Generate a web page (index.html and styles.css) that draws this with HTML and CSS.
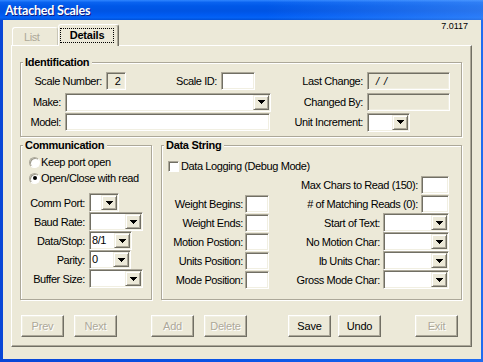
FILE: index.html
```html
<!DOCTYPE html>
<html lang="en">
<head>
<meta charset="utf-8">
<title>Attached Scales</title>
<link rel="stylesheet" href="styles.css">
</head>
<body>
<div class="window">
  <div class="titlebar"><span class="title">Attached Scales</span></div>
  <div class="client">
    <div class="header">
      <div class="tabs">
        <div class="tab tab-off">List</div>
        <div class="tab tab-on"><span class="focus">Details</span></div>
      </div>
      <div class="version">7.0117</div>
    </div>

    <div class="panel">
      <div class="group g-ident">
        <span class="legend">Identification</span>
        <div class="id-row">
          <span class="lbl w85">Scale Number:</span>
          <div class="box disabled w20 num">2</div>
          <span class="lbl w95">Scale ID:</span>
          <div class="box w34"></div>
          <span class="lbl w112">Last Change:</span>
          <div class="box disabled w83 date">/ /</div>
        </div>
        <div class="id-row r2">
          <span class="lbl w44">Make:</span>
          <div class="combo w206"><span class="val"></span><span class="drop"><svg width="7" height="4" viewBox="0 0 7 4"><path d="M0 0h7v1H0zM1 1h5v1H1zM2 2h3v1H2zM3 3h1v1H3z"/></svg></span></div>
          <span class="lbl w96">Changed By:</span>
          <div class="box disabled w83"></div>
        </div>
        <div class="id-row r3">
          <span class="lbl w44">Model:</span>
          <div class="box w205"></div>
          <span class="lbl w97">Unit Increment:</span>
          <div class="combo w43"><span class="val"></span><span class="drop"><svg width="7" height="4" viewBox="0 0 7 4"><path d="M0 0h7v1H0zM1 1h5v1H1zM2 2h3v1H2zM3 3h1v1H3z"/></svg></span></div>
        </div>
      </div>

      <div class="mid">
        <div class="group g-comm">
          <span class="legend">Communication</span>
          <div class="opt first"><span class="radio"></span><span>Keep port open</span></div>
          <div class="opt"><span class="radio on"></span><span>Open/Close with read</span></div>
          <div class="comm-rows">
            <div class="c-row">
              <span class="lbl w68">Comm Port:</span>
              <div class="combo w30"><span class="val"></span><span class="drop"><svg width="7" height="4" viewBox="0 0 7 4"><path d="M0 0h7v1H0zM1 1h5v1H1zM2 2h3v1H2zM3 3h1v1H3z"/></svg></span></div>
            </div>
            <div class="c-row">
              <span class="lbl w68">Baud Rate:</span>
              <div class="combo w54"><span class="val"></span><span class="drop"><svg width="7" height="4" viewBox="0 0 7 4"><path d="M0 0h7v1H0zM1 1h5v1H1zM2 2h3v1H2zM3 3h1v1H3z"/></svg></span></div>
            </div>
            <div class="c-row">
              <span class="lbl w68">Data/Stop:</span>
              <div class="combo w43"><span class="val">8/1</span><span class="drop"><svg width="7" height="4" viewBox="0 0 7 4"><path d="M0 0h7v1H0zM1 1h5v1H1zM2 2h3v1H2zM3 3h1v1H3z"/></svg></span></div>
            </div>
            <div class="c-row">
              <span class="lbl w68">Parity:</span>
              <div class="combo w42"><span class="val">0</span><span class="drop"><svg width="7" height="4" viewBox="0 0 7 4"><path d="M0 0h7v1H0zM1 1h5v1H1zM2 2h3v1H2zM3 3h1v1H3z"/></svg></span></div>
            </div>
            <div class="c-row">
              <span class="lbl w68">Buffer Size:</span>
              <div class="combo w54"><span class="val"></span><span class="drop"><svg width="7" height="4" viewBox="0 0 7 4"><path d="M0 0h7v1H0zM1 1h5v1H1zM2 2h3v1H2zM3 3h1v1H3z"/></svg></span></div>
            </div>
          </div>
        </div>

        <div class="group g-data">
          <span class="legend">Data String</span>
          <div class="chk-row"><span class="check"></span><span>Data Logging (Debug Mode)</span></div>
          <div class="data-cols">
            <div class="d-left">
              <div class="d-row"></div>
              <div class="d-row"><span class="lbl w83 p2">Weight Begins:</span><div class="box w24"></div></div>
              <div class="d-row"><span class="lbl w83 p2">Weight Ends:</span><div class="box w24"></div></div>
              <div class="d-row"><span class="lbl w83 p2">Motion Postion:</span><div class="box w24"></div></div>
              <div class="d-row"><span class="lbl w83 p2">Units Position:</span><div class="box w24"></div></div>
              <div class="d-row"><span class="lbl w83 p2">Mode Position:</span><div class="box w24"></div></div>
            </div>
            <div class="d-right">
              <div class="d-row end"><span class="lbl p3">Max Chars to Read (150):</span><div class="box w28"></div></div>
              <div class="d-row end"><span class="lbl p3"># of Matching Reads (0):</span><div class="box w28"></div></div>
              <div class="d-row end"><span class="lbl p3">Start of Text:</span><div class="combo w66"><span class="val"></span><span class="drop"><svg width="7" height="4" viewBox="0 0 7 4"><path d="M0 0h7v1H0zM1 1h5v1H1zM2 2h3v1H2zM3 3h1v1H3z"/></svg></span></div></div>
              <div class="d-row end"><span class="lbl p3">No Motion Char:</span><div class="combo w66"><span class="val"></span><span class="drop"><svg width="7" height="4" viewBox="0 0 7 4"><path d="M0 0h7v1H0zM1 1h5v1H1zM2 2h3v1H2zM3 3h1v1H3z"/></svg></span></div></div>
              <div class="d-row end"><span class="lbl p3">lb Units Char:</span><div class="combo w66"><span class="val"></span><span class="drop"><svg width="7" height="4" viewBox="0 0 7 4"><path d="M0 0h7v1H0zM1 1h5v1H1zM2 2h3v1H2zM3 3h1v1H3z"/></svg></span></div></div>
              <div class="d-row end"><span class="lbl p3">Gross Mode Char:</span><div class="combo w66"><span class="val"></span><span class="drop"><svg width="7" height="4" viewBox="0 0 7 4"><path d="M0 0h7v1H0zM1 1h5v1H1zM2 2h3v1H2zM3 3h1v1H3z"/></svg></span></div></div>
            </div>
          </div>
        </div>
      </div>

      <div class="buttons">
        <div class="btn off">Prev</div>
        <div class="btn off b-next">Next</div>
        <div class="btn off b-add">Add</div>
        <div class="btn off b-del">Delete</div>
        <div class="btn b-save">Save</div>
        <div class="btn b-undo">Undo</div>
        <div class="btn off b-exit">Exit</div>
      </div>
    </div>
  </div>
</div>
</body>
</html>
```

FILE: styles.css
```css
* { box-sizing: border-box; }
html, body { margin: 0; padding: 0; }
body {
  width: 483px;
  height: 362px;
  overflow: hidden;
  font-family: "Liberation Sans", Arial, sans-serif;
  font-size: 11px;
  letter-spacing: -0.4px;
  color: #000;
  background: #0a4fe0;
}

.window {
  width: 483px;
  height: 362px;
  display: flex;
  flex-direction: column;
  background: linear-gradient(to right, #0846d6, #0a55e6 50%, #1f6cf0);
}

.titlebar {
  flex: none;
  height: 20px;
  display: flex;
  align-items: center;
  padding-left: 5px;
  background:
    linear-gradient(to right, rgba(255,255,255,0) 55%, rgba(120,180,255,0.35) 100%),
    linear-gradient(to bottom, #2f86ff 0%, #0a63f0 12%, #0058e8 30%, #0054e3 55%, #005bf2 75%, #0462f5 88%, #0050d8 100%);
}
.title {
  color: #fff;
  font-family: Lato, "Liberation Sans", sans-serif;
  font-weight: bold;
  font-size: 12.5px;
  letter-spacing: -0.2px;
  text-shadow: 1px 1px 0 #0a1883;
}

.client {
  flex: 1;
  margin: 0 2px 3px 3px;
  background: #ece9d8;
  display: flex;
  flex-direction: column;
}

/* header: tabs + version */
.header {
  display: flex;
  justify-content: space-between;
  align-items: flex-start;
  height: 25px;
  position: relative;
  z-index: 1;
}
.tabs {
  display: flex;
  align-items: flex-end;
  height: 26px;
  margin-left: 8px;
}
.tab {
  border: 1px solid;
  border-bottom: none;
  border-color: #fff #716f64 #716f64 #fff;
  border-radius: 3px 3px 0 0;
  background: #ece9d8;
}
.tab-off {
  width: 46px;
  height: 18px;
  margin-left: 1px;
  margin-bottom: 1px;
  padding: 3px 0 0 11px;
  color: #aca899;
  line-height: 13px;
  border-color: #fff #c9c6b6 #c9c6b6 #fff;
}
.tab-on {
  width: 61px;
  height: 22px;
  padding: 3px 0 0 1px;
  box-shadow: inset -1px 0 0 #aca899;
}
.focus {
  display: block;
  width: 54px;
  height: 15px;
  border: 1px dotted #000;
  text-align: center;
  font-weight: bold;
  line-height: 13px;
  letter-spacing: -0.2px;
}
.version {
  margin: 1px 13px 0 0;
  font-size: 9px;
  line-height: 11px;
  letter-spacing: 0;
}

/* tab panel */
.panel {
  width: 461px;
  height: 302px;
  margin-left: 8px;
  padding: 16px 0 0 8px;
  border: 1px solid;
  border-color: #fff #716f64 #716f64 #fff;
  box-shadow: inset -1px -1px 0 #aca899;
}

.group {
  position: relative;
  border: 1px solid #aca899;
  box-shadow: inset 1px 1px 0 #fff, 1px 1px 0 #fff;
}
.legend {
  position: absolute;
  top: -7px;
  left: 2px;
  padding: 0 3px 0 2px;
  background: #ece9d8;
  font-weight: bold;
  line-height: 13px;
  letter-spacing: -0.3px;
  white-space: nowrap;
}

.g-ident {
  width: 442px;
  height: 75px;
  padding-top: 9px;
}
.id-row {
  display: flex;
  align-items: center;
  height: 18px;
}
.id-row.r2 { margin-top: 3px; }
.id-row.r3 { margin-top: 2px; }

.lbl {
  flex: none;
  text-align: right;
  padding-right: 4px;
  white-space: nowrap;
}
.p2 { padding-right: 2px; }
.p3 { padding-right: 3px; }

.w20 { width: 20px; }
.w24 { width: 24px; }
.w28 { width: 28px; }
.w30 { width: 30px; }
.w34 { width: 34px; }
.w42 { width: 42px; }
.w43 { width: 43px; }
.w44 { width: 44px; }
.w54 { width: 54px; }
.w66 { width: 66px; }
.w68 { width: 68px; }
.w83 { width: 83px; }
.w85 { width: 85px; }
.w95 { width: 95px; }
.w96 { width: 96px; }
.w97 { width: 97px; }
.w112 { width: 112px; }
.w205 { width: 205px; }
.w206 { width: 206px; }

/* sunken text box */
.box {
  flex: none;
  height: 18px;
  border: 1px solid;
  border-color: #aca899 #fff #fff #aca899;
  box-shadow: inset 1px 1px 0 #716f64, inset -1px -1px 0 #f1efe2;
  background: #fff;
  line-height: 16px;
}
.box.disabled { background: #ece9d8; }
.box.num { text-align: center; padding-left: 3px; }
.box.date { padding-left: 8px; font-style: italic; letter-spacing: 1px; }

/* combo box */
.combo {
  flex: none;
  display: flex;
  height: 19px;
  padding: 1px;
  border: 1px solid;
  border-color: #aca899 #fff #fff #aca899;
  box-shadow: inset 1px 1px 0 #716f64, inset -1px -1px 0 #f1efe2;
  background: #fff;
}
.combo .val {
  flex: 1;
  padding-left: 1px;
  line-height: 15px;
}
.drop {
  flex: none;
  width: 16px;
  display: flex;
  align-items: center;
  justify-content: center;
  background: #ece9d8;
  border: 1px solid;
  border-color: #f1efe2 #716f64 #716f64 #f1efe2;
  box-shadow: inset 1px 1px 0 #fff, inset -1px -1px 0 #aca899;
}
.drop svg { display: block; fill: #000; }

/* middle groups */
.mid {
  display: flex;
  gap: 9px;
  margin-top: 8px;
}
.g-comm {
  width: 132px;
  height: 155px;
  padding-top: 8px;
}
.g-data {
  width: 301px;
  height: 155px;
  padding: 12px 12px 0 0;
}

.opt {
  display: flex;
  align-items: center;
  height: 16px;
  padding-left: 8px;
  white-space: nowrap;
}
.radio {
  flex: none;
  width: 11px;
  height: 11px;
  margin-right: 1px;
  border-radius: 50%;
  background: #fff;
  border: 1px solid;
  border-color: #aca899 #fff #fff #aca899;
  box-shadow: inset 1px 1px 0 #9d9a8c;
  display: flex;
  align-items: center;
  justify-content: center;
}
.radio.on::after {
  content: "";
  width: 4px;
  height: 4px;
  border-radius: 50%;
  background: #000;
}

.comm-rows { margin-top: 7px; }
.c-row {
  display: flex;
  align-items: center;
  height: 19px;
}

.chk-row {
  display: flex;
  align-items: center;
  height: 16px;
  padding-left: 6px;
  white-space: nowrap;
}
.check {
  flex: none;
  width: 11px;
  height: 11px;
  margin-right: 2px;
  background: #fff;
  border: 1px solid;
  border-color: #aca899 #fff #fff #aca899;
  box-shadow: inset 1px 1px 0 #716f64;
}

.data-cols {
  display: flex;
  margin-top: 1px;
}
.d-left { width: 107px; flex: none; }
.d-right { flex: 1; }
.d-row {
  display: flex;
  align-items: center;
  height: 19px;
}
.d-row.end { justify-content: flex-end; }

/* buttons */
.buttons {
  display: flex;
  margin: 15px 0 0 1px;
}
.btn {
  flex: none;
  width: 43px;
  height: 22px;
  display: flex;
  align-items: center;
  justify-content: center;
  background: #ece9d8;
  border: 1px solid;
  border-color: #fff #716f64 #716f64 #fff;
  box-shadow: inset -1px -1px 0 #aca899, inset 1px 1px 0 #f1efe2;
  letter-spacing: -0.2px;
}
.btn.off {
  color: #aca899;
  text-shadow: 1px 1px 0 #fff;
}
.b-next { margin-left: 10px; }
.b-add { margin-left: 34px; }
.b-del { margin-left: 10px; }
.b-save { margin-left: 41px; }
.b-undo { margin-left: 7px; }
.b-exit { margin-left: 34px; }
```
